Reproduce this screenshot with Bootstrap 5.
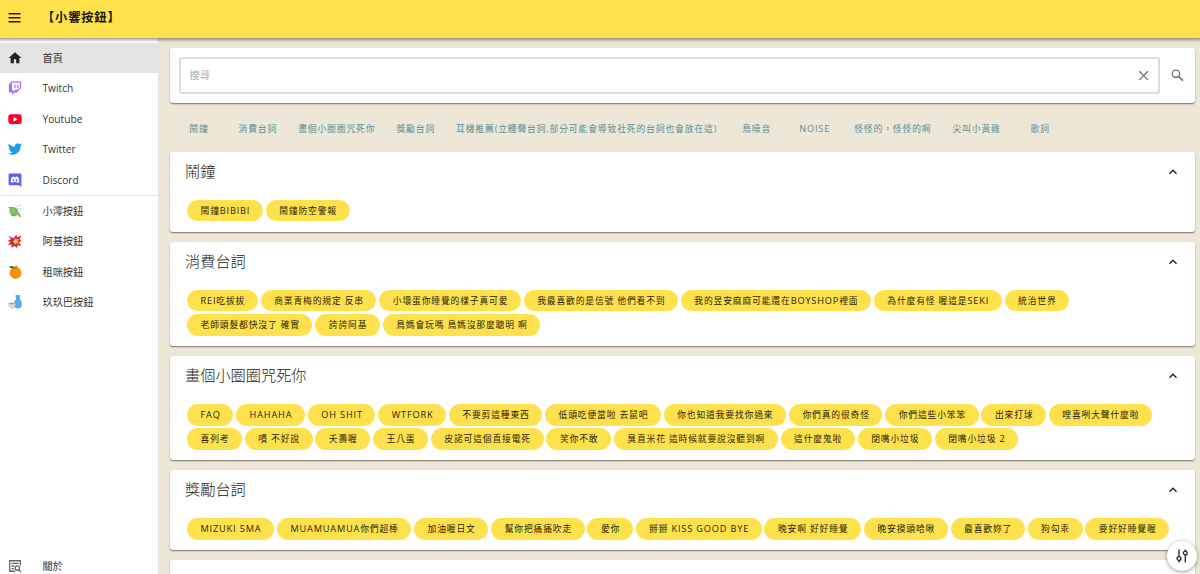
<!DOCTYPE html>
<html lang="zh-Hant">
<head>
<meta charset="utf-8">
<meta name="viewport" content="width=device-width, initial-scale=1">
<title>【小響按鈕】</title>
<link href="https://cdn.jsdelivr.net/npm/bootstrap@5.3.0/dist/css/bootstrap.min.css" rel="stylesheet">
<style>
html, body { height: 100%; }
body { background: #ede7d7; font-family: "Open Sans", "Noto Sans CJK TC", sans-serif; font-size: 10.2px; line-height: 1.4; color: #333; overflow: hidden; }
.topbar { height: 38px; background: #ffe14d; box-shadow: 0 1px 3px 1px rgba(0,0,0,.4); z-index: 5; padding: 0 8px 3px; }
.topbar svg { width: 13px; height: 13px; margin-top: -1px; }
.brand { font-size: 12.2px; font-weight: 700; color: #1c1a10; margin-left: 21px; letter-spacing: .9px; }
.side { width: 159px; border-right: 1px solid #dfdfe4; padding-top: 4.6px; }
.side a { height: 30.5px; padding-left: 8px; color: #333; }
.side a.on { background: #e3e3e3; }
.side svg { width: 14px; height: 14px; margin-right: 20.5px; flex: none; }
.side .rule { border-top: 1px solid #e2e5ea; margin-bottom: -.6px; }
.content { padding: 10px 5px 0 10.5px; }
.panel { background: #fff; border-radius: 3px; box-shadow: 0 1px 1.5px rgba(0,0,0,.5); }
.finder { height: 55.2px; padding: 0 10.5px 0 9.5px; }
.box { height: 36.5px; border: 2px solid #dcdcdc; border-radius: 3px; padding: 0 7px 0 8.5px; color: #adadad; }
.finder svg { width: 15px; height: 15px; }
.tabs { height: 48.6px; padding: 3px 0 0 .5px; color: #5c8d95; font-size: 8.8px; letter-spacing: .86px; }
.tabs a { min-width: 58px; padding: 0 10.5px; color: inherit; text-align: center; white-space: nowrap; }
.latin { font-size: 9.2px; line-height: 1; }
.group { margin-bottom: 10px; padding: 0 15px 10.2px 15.5px; }
.group-head { height: 40px; font-size: 15.2px; font-weight: 300; color: #222; }
.group-head svg { width: 14px; height: 14px; }
.pills { padding: 8px 0 0 2px; gap: 2.6px 2.8px; }
.pill { height: 21.7px; border: 0; border-radius: 11px; background: #ffe14d; color: #29240c; font-size: 8.8px; letter-spacing: .83px; padding: 1px 12.6px 0 13.5px; white-space: nowrap; line-height: 20px; }
.fab { right: 3px; bottom: 3px; width: 30px; height: 30px; background: #fff; box-shadow: 0 1px 4px rgba(0,0,0,.4); }
</style>
</head>
<body class="d-flex flex-column">
<header class="topbar d-flex align-items-center position-relative flex-shrink-0">
  <svg viewBox="0 0 13 13"><path d="M.5 2.700h12M.5 6.700h12M.5 10.700h12" stroke="#222" stroke-width="1.600"/></svg>
  <span class="brand">【小響按鈕】</span>
</header>
<div class="d-flex flex-grow-1 overflow-hidden">
  <nav class="side bg-white d-flex flex-column flex-shrink-0">
    <a class="on d-flex align-items-center text-decoration-none"><svg viewBox="0 0 24 24"><path fill="#222" d="M10 21v-7h4v7h5.500v-9H23L12 2 1 12h3.500v9z"/></svg>首頁</a>
    <a class="d-flex align-items-center text-decoration-none"><svg viewBox="0 0 24 24"><path fill="#a970ff" fill-rule="evenodd" d="M6 1 1.500 5.500v14H7V24l4.500-4.500H15l7.500-7.500V1zm.8 2H20.500v8l-4 4h-4L9 18.500V15H6.800zM11 6v6h2V6zm5 0v6h2V6z"/></svg>Twitch</a>
    <a class="d-flex align-items-center text-decoration-none"><svg viewBox="0 0 24 24"><rect x="0.500" y="4" width="23" height="16.500" rx="4" fill="#ff0033"/><path fill="#fff" d="m9.500 8.500 7 3.800-7 3.800z"/></svg>Youtube</a>
    <a class="d-flex align-items-center text-decoration-none"><svg viewBox="0 0 24 24"><path fill="#1d9bf0" d="M23.950 4.570a10 10 0 0 1-2.820.770 4.960 4.960 0 0 0 2.160-2.720 9.900 9.900 0 0 1-3.120 1.190 4.920 4.920 0 0 0-8.380 4.480C7.690 8.090 4.070 6.130 1.640 3.160a4.920 4.920 0 0 0 1.520 6.570 4.900 4.900 0 0 1-2.230-.61v.06a4.920 4.920 0 0 0 3.950 4.830 5 5 0 0 1-2.210.08 4.940 4.940 0 0 0 4.600 3.420A9.870 9.870 0 0 1 0 19.540a13.990 13.990 0 0 0 7.550 2.210c9.050 0 14-7.500 14-13.980l-.02-.64a9.940 9.940 0 0 0 2.420-2.560z"/></svg>Twitter</a>
    <a class="d-flex align-items-center text-decoration-none"><svg viewBox="0 0 24 24"><path fill="#5865f2" d="M3 1h18a2 2 0 0 1 2 2v21l-4-3H3a2 2 0 0 1-2-2V3a2 2 0 0 1 2-2z"/><path fill="#fff" fill-rule="evenodd" d="M7 7 10 6l.7 1.200h2.600L14 6l3 1c2 3 2.700 5.500 2.300 8.500L16 17l-1-1.500H9L8 17l-3.300-1.500C4.500 12.500 5 10 7 7zm2.300 3.700a1.500 1.700 0 1 0 .01 0zm5.400 0a1.500 1.700 0 1 0 .01 0z"/></svg>Discord</a>
    <div class="rule"></div>
    <a class="d-flex align-items-center text-decoration-none"><svg viewBox="0 0 24 24"><path fill="#77b859" d="M0 5c5 1 8-1 12 1 4 2 6 5 5.500 8l3 3.500L23 22l-2 .5-5-4c-4 4.500-10 3-12-1l2-1-5-1.500 3-2-3-2.500 3-1z"/><path stroke="#a8d48a" stroke-width="1" fill="none" d="m4 8 12 10M10 7l1 6-6 2"/><path stroke="#7fc5ef" stroke-width="1.600" d="m16 3-2 2m7-4-2 3m3 3-2 3m-3-3-1 2m5 3-1 2"/></svg>小澪按鈕</a>
    <a class="d-flex align-items-center text-decoration-none"><svg viewBox="0 0 24 24"><path fill="#d2263a" d="m11 6 3-5 2 5 7-4-3 7 3 2-4 3 4 7-6-2-2 5-4-4-5 4v-6l-6 1 4-5-4-3 5-2-4-6 7 4z"/><path fill="#ffb13b" d="m12 7 2 2 5-1-2 4 1 5-4-1-3 2-1-4-3-2 4-1z"/><circle cx="12.500" cy="12.500" r="2" fill="#fff2ba"/></svg>阿基按鈕</a>
    <a class="d-flex align-items-center text-decoration-none"><svg viewBox="0 0 24 24"><circle cx="13" cy="13.500" r="10.300" fill="#f8900b"/><path fill="#537b2f" d="M12 5C8 7 5 6 1 3c4-2 8-2 11 1l3-3 1 1-3 4z"/></svg>租咪按鈕</a>
    <a class="d-flex align-items-center text-decoration-none"><svg viewBox="0 0 24 24"><path fill="#55acee" d="M13 0h8v3l-1.500 3c0 2 4 3 4 7v8q-6.500 4-13 0v-8c0-4 4-5 4-7L13 3z"/><path fill="#cbd6de" d="M0 14h13c0 4-1 6-3.500 7.500V23h-6v-1.500C1 20 0 18 0 14z"/><path fill="#3b88c3" d="M14 6h6v1.500h-6z"/><ellipse cx="6.500" cy="14.500" rx="5.500" ry="1.200" fill="#8fa3b0"/></svg>玖玖巴按鈕</a>
    <a class="d-flex align-items-center text-decoration-none mt-auto" style="margin-bottom:-7.500px"><svg viewBox="0 0 24 24" fill="none" stroke="#666" stroke-width="2.200"><path d="M12 21H3V3h18v8M6 7.500h12M6 12h5M6 16.500h4"/><circle cx="16" cy="15.500" r="3.800"/><path d="m18.700 18.500 4 4"/></svg>關於</a>
  </nav>
  <main class="content flex-grow-1 overflow-hidden">
    <div class="panel finder d-flex align-items-center">
      <div class="box d-flex align-items-center justify-content-between flex-grow-1"><span>搜尋</span>
        <svg viewBox="0 0 15 15"><path d="m3.300 3.300 8.600 8.600m0-8.600-8.600 8.600" stroke="#707070" stroke-width="1.300"/></svg></div>
      <svg class="flex-shrink-0" style="margin-left:10px" viewBox="0 0 15 15" fill="none" stroke="#707070"><circle cx="6" cy="5.800" r="3.700" stroke-width="1.300"/><path d="m8.700 8.500 4.200 4.200" stroke-width="1.700"/></svg>
    </div>
    <nav class="tabs d-flex align-items-center" id="tabs"></nav>
    <div id="groups"></div>
  </main>
</div>
<button class="fab position-fixed border-0 rounded-circle p-0 d-flex align-items-center justify-content-center" aria-label="設定">
  <svg width="14" height="14" viewBox="0 0 14 14" fill="none" stroke="#222" stroke-width="1.300"><path d="M4 .5v7M4 11.500v2M10.300 6v7.500M10.300.5v1.500"/><circle cx="4" cy="9.500" r="1.900"/><circle cx="10.300" cy="4" r="1.900"/></svg>
</button>
<script src="https://cdn.jsdelivr.net/npm/bootstrap@5.3.0/dist/js/bootstrap.bundle.min.js"></script>
<script>
const tabs = ['鬧鐘','消費台詞','畫個小圈圈咒死你','獎勵台詞','耳機推薦(立體聲台詞,部分可能會導致社死的台詞也會放在這)','鳥噪音','NOISE','怪怪的，怪怪的啊','尖叫小黃雞','歌詞'];
const groups = [
  ['鬧鐘', ['鬧鐘BIBIBI','鬧鐘防空警報']],
  ['消費台詞', ['REI吃拔拔','商業青梅的規定 反串','小壞蛋你睡覺的樣子真可愛','我最喜歡的是信號 他們看不到','我的昱安麻麻可能還在BOYSHOP裡面','為什麼有怪 喔這是SEKI','統治世界','老師頭髮都快沒了 確實','誇誇阿基','鳥媽會玩嗎 鳥媽沒那麼聰明 啊']],
  ['畫個小圈圈咒死你', ['FAQ','HAHAHA','OH SHIT','WTFORK','不要剪這種東西','低頭吃便當啦 去鼠吧','你也知道我要找你過來','你們真的很奇怪','你們這些小笨笨','出來打球','哩喜咧大聲什麼啦','喜列考','嘖 不好說','夭壽喔','王八蛋','皮諾可這個直接電死','笑你不敢','臭直米花 這時候就要說沒聽到啊','這什麼鬼啦','閉嘴小垃圾','閉嘴小垃圾 2']],
  ['獎勵台詞', ['MIZUKI 5MA','MUAMUAMUA你們超棒','加油喔日文','幫你把痛痛吹走','愛你','掰掰 KISS GOOD BYE','晚安啊 好好睡覺','晚安摸頭哈啾','最喜歡妳了','狗勾乖','要好好睡覺喔']],
  ['', []]
];
// Latin runs are set slightly larger than the Chinese text around them.
const sized = t => t.replace(/[A-Z0-9][A-Z0-9 ]*/g, '<span class="latin">$&</span>');
const chevron = '<svg viewBox="0 0 14 14"><path d="M3.500 8.700 7 5.300l3.500 3.400" fill="none" stroke="#222" stroke-width="1.400"/></svg>';
document.getElementById('tabs').innerHTML = tabs.map(t => `<a class="text-decoration-none">${sized(t)}</a>`).join('');
document.getElementById('groups').innerHTML = groups.map(([name, items]) =>
  `<section class="panel group"><div class="group-head d-flex align-items-center justify-content-between"><span>${name}</span>${chevron}</div>
  <div class="pills d-flex flex-wrap">${items.map(i => `<button class="pill">${sized(i)}</button>`).join('')}</div></section>`).join('');
</script>
</body>
</html>
